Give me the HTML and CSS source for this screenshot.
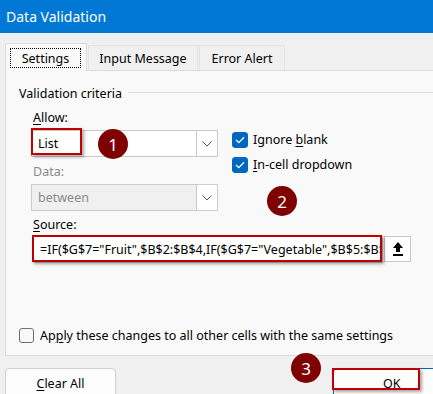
FILE: index.html
```html
<!DOCTYPE html>
<html lang="en">
    <head>
        <meta charset="UTF-8">
        <title>Data Validation</title>
        <link rel="stylesheet" href="styles.css">
    </head>
    <body>
        <div class="ventana">
            <div class="titulo">Data Validation</div>

            <!-- Pestañas -->
            <div class="pestanas">
                <div class="pestana activa"><span class="foco">Settings</span></div>
                <div class="pestana ancha">Input Message</div>
                <div class="pestana">Error Alert</div>
            </div>

            <div class="panel">
                <div class="grupo">
                    <span>Validation criteria</span>
                    <span class="linea"></span>
                </div>

                <div class="criterios">
                    <div class="col-izq">
                        <div class="etiqueta"><u>A</u>llow:</div>
                        <div class="combo">
                            <span class="valor">List</span>
                            <span class="flecha"><svg width="10" height="6" viewBox="0 0 10 6"><path d="M0.5 0.5 L5 5 L9.5 0.5" fill="none" stroke="#555" stroke-width="1"/></svg></span>
                            <span class="marco marco-lista"></span>
                            <span class="badge badge-1">1</span>
                        </div>
                        <div class="etiqueta gris">Data:</div>
                        <div class="combo deshabilitado">
                            <span class="valor">between</span>
                            <span class="flecha"><svg width="10" height="6" viewBox="0 0 10 6"><path d="M0.5 0.5 L5 5 L9.5 0.5" fill="none" stroke="#555" stroke-width="1"/></svg></span>
                        </div>
                    </div>
                    <div class="col-der">
                        <div class="check">
                            <span class="caja marcada"><svg width="10" height="8" viewBox="0 0 10 8"><path d="M1 4 L3.8 6.6 L9 1.2" fill="none" stroke="#fff" stroke-width="1.3"/></svg></span>
                            <span>Ignore <u>b</u>lank</span>
                        </div>
                        <div class="check">
                            <span class="caja marcada"><svg width="10" height="8" viewBox="0 0 10 8"><path d="M1 4 L3.8 6.6 L9 1.2" fill="none" stroke="#fff" stroke-width="1.3"/></svg></span>
                            <span><u>I</u>n-cell dropdown</span>
                        </div>
                        <span class="badge badge-2">2</span>
                    </div>
                </div>

                <div class="etiqueta fuente-lbl"><u>S</u>ource:</div>
                <div class="fila-fuente">
                    <div class="entrada">=IF($G$7="Fruit",$B$2:$B$4,IF($G$7="Vegetable",$B$5:$B$7,""))</div>
                    <div class="boton-rango">
                        <svg width="12" height="16" viewBox="0 0 12 16"><path d="M6 1 L11 7 L8 7 L8 11 L4 11 L4 7 L1 7 Z" fill="#000"/><rect x="1" y="13" width="10" height="2" fill="#000"/></svg>
                    </div>
                    <span class="marco marco-fuente"></span>
                </div>

                <div class="check aplicar">
                    <span class="caja"></span>
                    <span>Ap<u>p</u>ly these changes to all other cells with the same settings</span>
                </div>
            </div>

            <!-- Botones -->
            <div class="botones">
                <div class="boton"><u>C</u>lear All</div>
                <div class="boton boton-ok">
                    OK
                    <span class="marco marco-ok"></span>
                    <span class="badge badge-3">3</span>
                </div>
            </div>
        </div>
    </body>
</html>
```

FILE: styles.css
```css
/* Ventana de validación de datos */
body {
    margin: 0;
    background-color: #f0f0f0;
    font-family: "Noto Sans", "Open Sans", sans-serif;
    font-size: 12px;
    color: #000;
    overflow: hidden;
}
u {
    text-decoration-thickness: 1px;
    text-underline-offset: 2px;
}
.ventana {
    width: 433px;
    height: 394px;
    overflow: hidden;
    position: relative;
}
.titulo {
    height: 33px;
    background-color: #0078d4;
    color: white;
    font-size: 14px;
    padding-left: 6px;
    display: flex;
    align-items: center;
}

/* Pestañas */
.pestanas {
    display: flex;
    align-items: flex-end;
    margin-top: 10px;
    padding-left: 5px;
    gap: 1px;
    height: 27px;
    position: relative;
    z-index: 2;
}
.pestana {
    box-sizing: border-box;
    height: 25px;
    width: 86px;
    border: 1px solid #e3e3e3;
    border-bottom: none;
    display: flex;
    align-items: center;
    justify-content: center;
    font-size: 12.5px;
    padding-top: 1px;
}
.pestana.ancha {
    width: 110px;
}
.pestana.activa {
    height: 28px;
    width: 82px;
    background-color: #f9f9f9;
    margin-bottom: -1px;
    border-color: #dcdcdc;
    padding: 4px 5px 3px 4px;
}
.foco {
    border: 1px dotted #000;
    flex: 1;
    align-self: stretch;
    display: flex;
    align-items: center;
    justify-content: center;
}

/* Panel */
.panel {
    box-sizing: border-box;
    margin-left: 5px;
    width: 440px;
    height: 286px;
    background-color: #f9f9f9;
    border: 1px solid #dcdcdc;
    border-right: none;
    padding: 13px 0 0 13px;
    position: relative;
}
.grupo {
    display: flex;
    align-items: center;
    gap: 6px;
    font-size: 12.5px;
    height: 18px;
}
.linea {
    flex: 1;
    height: 1px;
    background-color: #dcdcdc;
    margin-top: -2px;
}
.criterios {
    display: flex;
    padding-left: 12px;
    margin-top: 7px;
}
.col-izq {
    width: 187px;
}
.col-der {
    padding-left: 14px;
    padding-top: 18px;
    position: relative;
    flex: 1;
}
.etiqueta {
    font-size: 12.5px;
    height: 18px;
    line-height: 18px;
    padding-left: 2px;
}
.gris {
    color: #8a8a8a;
}
.combo {
    box-sizing: border-box;
    height: 27px;
    margin-top: 3px;
    margin-bottom: 6px;
    background-color: white;
    border: 1px solid #c8c8c8;
    display: flex;
    align-items: center;
    position: relative;
    font-size: 12.5px;
}
.combo .valor {
    flex: 1;
    padding-left: 6px;
}
.combo .flecha {
    width: 20px;
    align-self: stretch;
    border-left: 1px solid #c8c8c8;
    display: flex;
    align-items: center;
    justify-content: center;
    background-color: white;
}
.combo.deshabilitado {
    background-color: #f0f0f0;
    color: #8a8a8a;
    border-color: #cccccc;
}
.check {
    display: flex;
    align-items: center;
    gap: 5px;
    height: 25px;
    font-size: 12.5px;
}
.caja {
    box-sizing: border-box;
    width: 16px;
    height: 16px;
    border-radius: 3px;
    border: 1px solid #666;
    background-color: white;
    display: flex;
    align-items: center;
    justify-content: center;
}
.caja.marcada {
    background-color: #0067c0;
    border-color: #0067c0;
}
.fuente-lbl {
    margin-left: 12px;
    margin-top: -1px;
}
.fila-fuente {
    display: flex;
    margin-left: 14px;
    margin-top: 2px;
    position: relative;
    height: 27px;
}
.entrada {
    box-sizing: border-box;
    width: 350px;
    background-color: white;
    border: 1px solid #c8c8c8;
    padding-left: 6px;
    white-space: nowrap;
    overflow: hidden;
    display: flex;
    align-items: center;
    font-size: 12.5px;
}
.boton-rango {
    box-sizing: border-box;
    width: 27px;
    height: 26px;
    margin-left: 1px;
    background-color: white;
    border: 1px solid #c8c8c8;
    display: flex;
    align-items: center;
    justify-content: center;
}
.aplicar {
    margin-top: 60px;
    gap: 6px;
}
.aplicar .caja {
    width: 15px;
    height: 15px;
    border-color: #707070;
    background-color: #f9f9f9;
}

/* Botones inferiores */
.botones {
    display: flex;
    justify-content: space-between;
    margin-top: 12px;
    padding-left: 5px;
}
.boton {
    box-sizing: border-box;
    width: 111px;
    height: 40px;
    background-color: #fdfdfd;
    border: 1px solid #d0d0d0;
    border-radius: 4px;
    text-align: center;
    padding-top: 6px;
    font-size: 12.5px;
    position: relative;
}
.boton-ok {
    width: 110px;
    margin-right: -10px;
    border: 1px solid #0067c0;
    text-align: left;
    padding-left: 49px;
}

/* Anotaciones sobre la captura */
.marco {
    position: absolute;
    border: 2px solid #c00000;
    box-shadow: 2px 2px 3px rgba(0,0,0,0.35);
    pointer-events: none;
}
.marco-lista {
    left: -1px;
    top: -3px;
    width: 47px;
    height: 23px;
}
.marco-fuente {
    left: -1px;
    top: -1px;
    width: 346px;
    height: 23px;
}
.marco-ok {
    left: -2px;
    top: -1px;
    width: 84px;
    height: 18px;
}
.badge {
    position: absolute;
    width: 30px;
    height: 30px;
    border-radius: 50%;
    background-color: #7f0000;
    color: white;
    font-size: 17px;
    display: flex;
    align-items: center;
    justify-content: center;
    z-index: 3;
}
.badge-1 {
    left: 66px;
    top: -2px;
}
.badge-2 {
    left: 49px;
    top: 77px;
}
.badge-3 {
    left: -43px;
    top: -16px;
}
```
